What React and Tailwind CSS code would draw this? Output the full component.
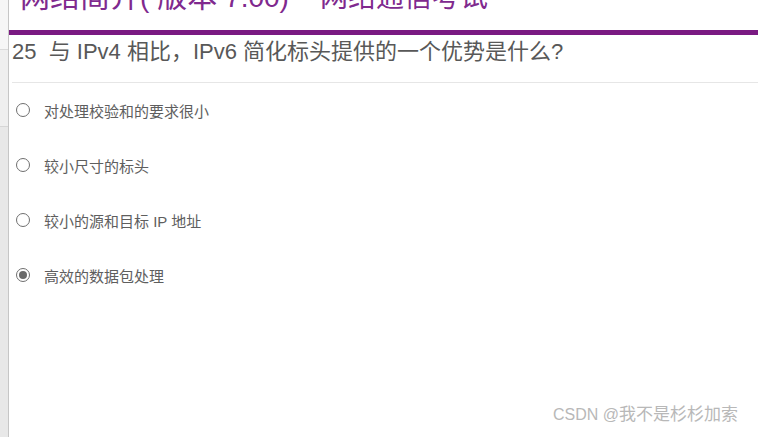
export default function App() {
  const options = [
    { text: "对处理校验和的要求很小", checked: false },
    { text: "较小尺寸的标头", checked: false },
    { text: "较小的源和目标 IP 地址", checked: false },
    { text: "高效的数据包处理", checked: true },
  ];
  return (
    <div className="relative w-[758px] h-[437px] flex overflow-hidden bg-white font-['Liberation_Sans','Noto_Sans_CJK_SC',sans-serif]">
      <div className="w-[9px] shrink-0 flex flex-col border-r border-[#c6c6c6]">
        <div className="h-[50px] bg-[#f6f6f6] border-b border-[#dadada]"></div>
        <div className="h-[77px] bg-[#efefef] border-b border-[#d6d6d6]"></div>
        <div className="flex-1 bg-[#e8e8e8]"></div>
      </div>
      <div className="flex-1 flex flex-col">
        <div className="h-[30px] overflow-hidden">
          <div className="mt-[-17px] pl-[11px] flex items-baseline leading-[28px] text-[#80298e] whitespace-pre">
            <span className="text-[30px]">网络简介</span>
            <span className="text-[28px]">(</span>
            <span className="text-[30px] ml-[8px]">版本</span>
            <span className="text-[28px]"> 7.00)</span>
            <span className="text-[28px] leading-[14px] w-[31px] text-center self-start">–</span>
            <span className="text-[28px]">网络通信考试</span>
          </div>
        </div>
        <div className="h-[5px] bg-[#7a1a82]"></div>
        <div className="ml-[3px] h-[48px] border-b border-[#e6e6e6]">
          <div className="text-[22px] leading-[34px] text-[#585858] whitespace-pre">
            25  与 IPv4 相比，IPv6 简化标头提供的一个优势是什么?
          </div>
        </div>
        <div className="flex flex-col">
          {options.map((o, i) => (
            <div key={i} className="h-[55px] flex items-center pl-[7px]">
              <div className="w-[14px] h-[14px] rounded-full border border-[#6f6f6f] bg-white flex items-center justify-center mt-[-2px]">
                {o.checked && <div className="w-[8px] h-[8px] rounded-full bg-[#6a6a6a]"></div>}
              </div>
              <span className="ml-[14px] text-[15px] leading-[20px] text-[#5e5e5e] mt-[2px]">{o.text}</span>
            </div>
          ))}
        </div>
      </div>
      <div className="absolute left-[553px] top-[405px] leading-[20px] text-[#b8b8b8] whitespace-pre">
        <span className="text-[16px]">CSDN @</span>
        <span className="text-[17px]">我不是杉杉加索</span>
      </div>
    </div>
  );
}
